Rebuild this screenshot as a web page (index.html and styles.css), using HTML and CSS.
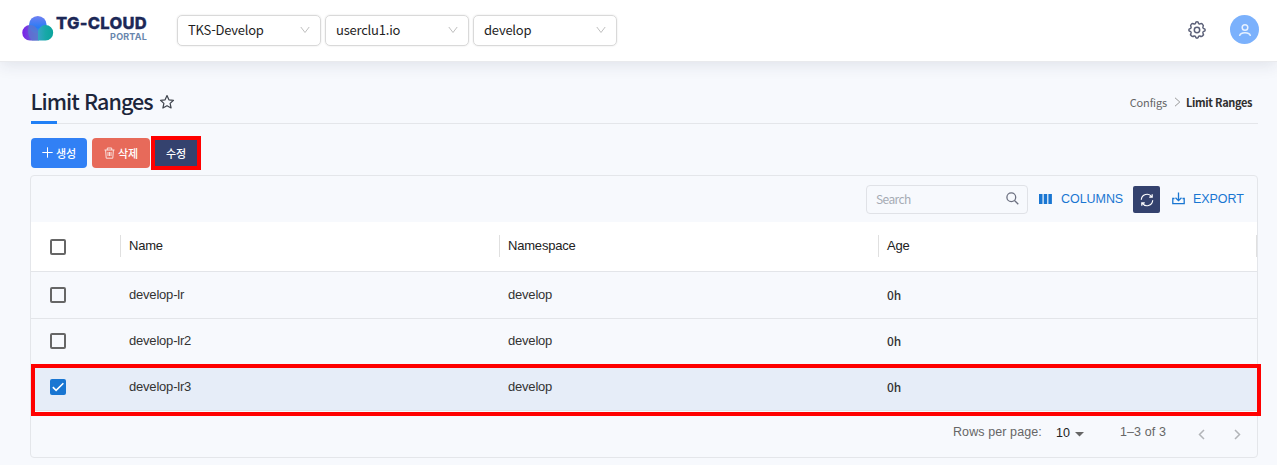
FILE: index.html
```html
<!DOCTYPE html>
<html lang="ko">
<head>
<meta charset="utf-8">
<title>Limit Ranges</title>
<link rel="stylesheet" href="styles.css">
</head>
<body>
<header class="topbar">
  <div class="logo">
    <svg class="cloud" width="32" height="26" viewBox="0 0 32 26">
      <defs>
        <linearGradient id="gTop" x1="0" y1="0" x2="0" y2="1"><stop offset="0" stop-color="#7080f2"/><stop offset=".65" stop-color="#287bf5"/><stop offset="1" stop-color="#4193dc"/></linearGradient>
        <linearGradient id="gLeft" x1="0" y1="0" x2="1" y2="0"><stop offset="0" stop-color="#7a1fe8"/><stop offset=".35" stop-color="#7440df"/><stop offset="1" stop-color="#5496c4"/></linearGradient>
        <linearGradient id="gRight" x1="0" y1="0" x2="1" y2="0"><stop offset="0" stop-color="#37a3c6"/><stop offset=".5" stop-color="#18a8a8"/><stop offset="1" stop-color="#0ba49c"/></linearGradient>
      </defs>
      <path d="M8 9h9v15.500H8A7.750 7.750 0 0 1 8 9z" fill="url(#gLeft)"/>
      <circle cx="15.800" cy="8.800" r="8.800" fill="url(#gTop)"/>
      <path d="M7 9.200C12 8.500 16 12 16 17V24.500H10C6 21 5 14 7 9.200z" fill="#5c74d0" opacity=".8"/>
      <path d="M16 24.500V16.500a7.500 7.500 0 0 1 7.500-7.400a7.700 7.700 0 0 1 0 15.400z" fill="url(#gRight)"/>
    </svg>
    <div class="brand"><span class="brand-main">TG-CLOUD</span><span class="brand-sub">PORTAL</span></div>
  </div>
  <div class="selects">
    <div class="select"><span>TKS-Develop</span><svg width="10" height="8" viewBox="0 0 10 8"><path d="M.8 1L5 6.500L9.200 1"/></svg></div>
    <div class="select"><span>userclu1.io</span><svg width="10" height="8" viewBox="0 0 10 8"><path d="M.8 1L5 6.500L9.200 1"/></svg></div>
    <div class="select"><span>develop</span><svg width="10" height="8" viewBox="0 0 10 8"><path d="M.8 1L5 6.500L9.200 1"/></svg></div>
  </div>
  <div class="tools">
    <svg class="gear" width="20" height="20" viewBox="0 0 20 20"><path d="M8.400 3.600Q8.600 1.800 10 1.800T11.600 3.600Q12 4.200 12.900 4Q14.400 2.900 15.500 4.200Q17 5.500 15.900 7.100Q15.700 8 16.500 8.400Q18.200 8.600 18.200 10T16.500 11.600Q15.700 12 15.900 12.900Q17 14.500 15.700 15.700Q14.500 17 12.900 16Q12 15.800 11.600 16.400Q11.400 18.200 10 18.200T8.400 16.400Q8 15.800 7.100 16Q5.500 17 4.300 15.700Q3 14.500 4.100 12.900Q4.300 12 3.500 11.600Q1.800 11.400 1.800 10T3.500 8.400Q4.300 8 4.100 7.100Q3 5.500 4.300 4.300Q5.500 3 7.100 4Q8 4.200 8.400 3.600z"/><circle cx="10" cy="10" r="2.700"/></svg>
    <div class="avatar"><svg width="14" height="14" viewBox="0 0 14 14"><circle cx="7" cy="4.500" r="2.800"/><path d="M1.600 13C2.300 8.800 11.700 8.800 12.400 13"/></svg></div>
  </div>
</header>
<main class="page">
  <div class="page-head">
    <h1>Limit Ranges</h1>
    <svg class="star" width="16" height="16" viewBox="0 0 16 16"><path d="M8 1.500L9.900 5.800L14.500 6.300L11.100 9.400L12.100 14L8 11.700L3.900 14L4.900 9.400L1.500 6.300L6.100 5.800z"/></svg>
    <nav class="crumbs"><span>Configs</span><svg width="7" height="10" viewBox="0 0 7 10"><path d="M1 .8L5.800 5L1 9.200"/></svg><b>Limit Ranges</b></nav>
  </div>
  <div class="actions">
    <button class="btn create"><svg width="11" height="11" viewBox="0 0 11 11"><path d="M5.500 .3V10.700M.3 5.500H10.700"/></svg><span>생성</span></button>
    <button class="btn remove"><svg width="11" height="12" viewBox="0 0 11 12"><path d="M.5 3H10.500M3.300 3V1H7.700V3M1.600 3L2.200 11.200H8.800L9.400 3M4 5V9M5.500 5V9M7 5V9"/></svg><span>삭제</span></button>
    <button class="btn edit"><span>수정</span></button>
  </div>
  <section class="panel">
    <div class="toolbar">
      <div class="search"><span>Search</span><svg width="13" height="13" viewBox="0 0 13 13"><circle cx="5.300" cy="5.300" r="4.400"/><path d="M8.500 8.500L12.300 12.300"/></svg></div>
      <div class="link columns"><svg width="13" height="10" viewBox="0 0 13 10"><path d="M0 0h3.500v10H0zM4.700 0h3.500v10H4.700zM9.400 0h3.500v10H9.400z"/></svg><span>COLUMNS</span></div>
      <div class="refresh"><svg width="14" height="14" viewBox="0 0 14 14"><path d="M1.300 6.700A5.700 5.700 0 0 1 11.700 3.800M12.200 1.200V4.200H9.200M12.700 7.300A5.700 5.700 0 0 1 2.300 10.200M1.800 12.800V9.800H4.800"/></svg></div>
      <div class="link export"><svg width="13" height="13" viewBox="0 0 13 13"><path d="M6.500 .5V8.500M3.500 5.800L6.500 8.700L9.500 5.800M2.500 6.500H.8V11.700H12.200V6.500H10.500"/></svg><span>EXPORT</span></div>
    </div>
    <div class="grid header"><div class="check"><i class="box"></i></div><div class="cell">Name</div><div class="cell">Namespace</div><div class="cell last">Age</div></div>
    <div class="grid row"><div class="check"><i class="box"></i></div><div class="cell">develop-lr</div><div class="cell">develop</div><div class="cell age">0h</div></div>
    <div class="grid row second"><div class="check"><i class="box"></i></div><div class="cell">develop-lr2</div><div class="cell">develop</div><div class="cell age">0h</div></div>
    <div class="grid row selected"><div class="check"><i class="box checked"><svg width="17" height="17" viewBox="0 0 17 17"><path d="M3 8.700L6.500 12.100L14.200 4.500"/></svg></i></div><div class="cell">develop-lr3</div><div class="cell">develop</div><div class="cell age">0h</div></div>
    <div class="pager">
      <span class="rpp">Rows per page:</span><span class="size">10</span><svg class="caret" width="9" height="5" viewBox="0 0 9 5"><path d="M0 0h9L4.500 4.500z"/></svg><span class="range">1–3 of 3</span>
      <svg class="arrow" width="7" height="11" viewBox="0 0 7 11"><path d="M6 1L1.500 5.500L6 10"/></svg>
      <svg class="arrow next" width="7" height="11" viewBox="0 0 7 11"><path d="M1 1L5.500 5.500L1 10"/></svg>
    </div>
  </section>
</main>
</body>
</html>
```
FILE: styles.css
```css
* { box-sizing: border-box; }
body { margin: 0; width: 1277px; height: 465px; overflow: hidden; background: #f7f9fd; color: #222; font-family: "Noto Sans CJK KR", sans-serif; font-size: 13px; }
svg { display: block; flex: none; fill: none; }
.topbar { position: relative; height: 62px; display: flex; padding: 15px 18px 0 22px; background: #fff; border-bottom: 1px solid #e9eaed; box-shadow: 0 2px 16px rgba(30, 40, 70, .12); }
.logo { display: flex; width: 155px; gap: 3px; padding-top: 1px; }
.brand { display: flex; flex-direction: column; width: 90px; color: #1c2857; white-space: nowrap; font-family: Inter, sans-serif; font-weight: 800; }
.brand-main { margin-left: -1px; font-size: 16.500px; line-height: 14px; letter-spacing: .3px; -webkit-text-stroke: .3px #1c2857; }
.brand-sub { margin-top: 2px; text-align: right; font-size: 9px; line-height: 9px; letter-spacing: .2px; font-weight: 700; color: #6886ad; }
.selects { display: flex; gap: 4px; }
.select { width: 144px; height: 31px; display: flex; align-items: center; justify-content: space-between; padding: 0 10px 2px 10px; border: 1px solid #d9d9d9; border-radius: 5px; box-shadow: 0 0 2px rgba(0, 0, 0, .12); font-size: 13px; letter-spacing: -.22px; color: #1f1f1f; }
.select path { stroke: #bfbfbf; stroke-width: 1; }
.tools { margin-left: auto; display: flex; gap: 23px; }
.gear { margin-top: 5px; stroke: #5b6078; stroke-width: 1.500; stroke-linejoin: round; }
.avatar { width: 29px; height: 29px; border-radius: 50%; background: #7bb1fc; display: grid; place-items: center; }
.avatar svg { stroke: #e6f1ff; stroke-width: 1.500; }
.page { padding: 27px 19px 0 31px; }
.page-head { position: relative; height: 35px; display: flex; border-bottom: 1px solid #e4e6ea; }
.page-head::after { content: ""; position: absolute; left: 0; bottom: -1px; width: 26px; height: 3px; background: #2080f6; }
h1 { margin: -1px 0 0 -.5px; width: 122.500px; white-space: nowrap; font-size: 21.500px; line-height: 26px; font-weight: 500; letter-spacing: -.95px; color: #1d263b; }
.star { margin: 5px 0 0 6px; stroke: #3f444d; stroke-width: 1.200; stroke-linejoin: round; }
.crumbs { margin-left: auto; padding-right: 6px; display: flex; height: 25px; align-items: center; font-size: 11px; color: #666; }
.crumbs svg { margin: 0 5px 0 7px; stroke: #999; }
.crumbs span { letter-spacing: -.15px; }
.crumbs b { color: #303030; letter-spacing: -.38px; }
.actions { display: flex; gap: 5px; padding-top: 14px; }
.btn { height: 30px; border: 0; border-radius: 4px; padding: 0 0 1px; display: flex; justify-content: center; align-items: center; gap: 3px; color: #fff; font: 500 11px "Noto Sans CJK KR", sans-serif; }
.btn svg { stroke: #fff; }
.create { width: 56px; background: #3180f5; }
.remove { width: 58px; background: #e76a5a; }
.remove svg { opacity: .8; }
.edit { width: 50px; height: 34px; margin: -2px 0 -2px -4px; border: 4px solid #f00; border-radius: 0; background: #34426e; }
.panel { height: 283px; margin: 7px 0 0 -1px; border: 1px solid #e4e6ea; border-radius: 4px; font-family: "Liberation Sans", Arial, sans-serif; }
.toolbar { height: 46px; padding: 9px 13px 0 0; display: flex; justify-content: flex-end; }
.search { width: 162px; height: 29px; border: 1px solid #e0e2e7; border-radius: 4px; padding: 0 8px 2px 9px; display: flex; justify-content: space-between; align-items: center; font: 12px "Noto Sans CJK KR", sans-serif; letter-spacing: -.6px; color: #a6abb4; }
.search svg { stroke: #6c7080; stroke-width: 1.300; }
.link { display: flex; align-items: center; height: 27px; color: #1976d2; font-size: 12.500px; letter-spacing: -.05px; }
.columns { margin-left: 11px; width: 94px; gap: 9px; }
.columns svg { fill: #1976d2; }
.refresh { width: 27px; height: 27px; margin-top: 1px; border-radius: 2px; display: grid; place-items: center; background: #34426e; }
.refresh svg { stroke: #fff; stroke-width: 1.200; }
.export { margin-left: 12px; width: 72px; gap: 8px; }
.export svg { stroke: #1976d2; stroke-width: 1.300; }
.grid { display: grid; grid-template-columns: 89px 379px 379px 1fr; align-items: center; }
.header { height: 50px; background: #fff; border-bottom: 1px solid #e3e5e9; }
.row { height: 47px; color: #333; border-bottom: 1px solid #e3e5e9; }
.check { padding-left: 19px; }
.box { display: block; width: 16px; height: 16px; border: 2px solid #666; border-radius: 2px; }
.cell { padding-left: 8px; font-size: 13px; letter-spacing: -.2px; line-height: 15px; margin-top: -1px; }
.header .cell { height: 22px; line-height: 22px; border-left: 1px solid #e0e0e0; color: #222; }
.row .cell { padding-left: 9px; }
.header .last { border-right: 1px solid #e0e0e0; }
.row .age { font: 500 12px/15px "Noto Sans CJK KR", sans-serif; margin-top: -2px; }
.second { height: 46px; border-bottom: 0; padding-bottom: 2px; }
.selected { position: relative; width: 1230px; height: 52px; margin-top: -1px; border: 4px solid #f00; background: linear-gradient(#e6edf8 0 42px, #dfe2e7 42px 43px, #f7f9fd 43px); padding-bottom: 6px; grid-template-columns: 85px 379px 379px 1fr; }
.selected .check { padding-left: 15px; }
.checked { border: 0; background: #1976d2; }
.checked svg { width: 16px; height: 16px; stroke: #fff; stroke-width: 1.700; }
.pager { height: 35px; display: flex; align-items: center; justify-content: flex-end; padding: 0 16px 4px 0; color: #666; font-size: 12.500px; letter-spacing: .1px; }
.size { margin-left: 14px; padding-top: 2px; color: #222; }
.caret { margin: 6px 0 0 5px; fill: #666; }
.range { margin-left: 36px; }
.arrow { margin: 6px 0 0 32px; stroke: #b2b4b8; stroke-width: 1.500; }
.next { margin-left: 29px; }
```
